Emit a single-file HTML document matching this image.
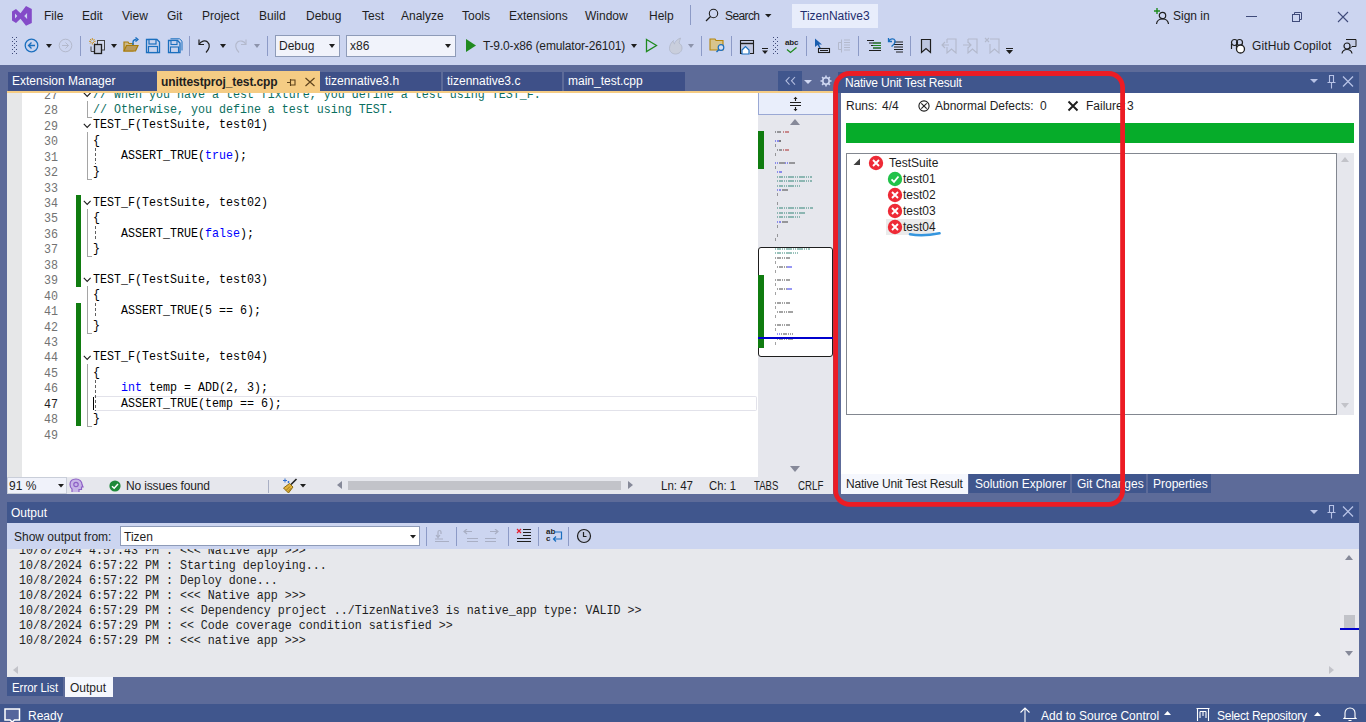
<!DOCTYPE html>
<html><head><meta charset="utf-8">
<style>
*{margin:0;padding:0;box-sizing:border-box}
html,body{width:1366px;height:722px;overflow:hidden}
body{background:#CCD5F0;font-family:"Liberation Sans",sans-serif;font-size:12px;color:#1E1E1E;position:relative}
.a{position:absolute}
.t{position:absolute;white-space:pre;line-height:14px}
.m{font-family:"Liberation Mono",monospace}
.cl{position:absolute;white-space:pre;font-family:"Liberation Mono",monospace;font-size:11.67px;line-height:15.45px;color:#000;transform:translateY(1.5px) scaleY(1.04);transform-origin:0 10.84px}
.ln{left:30px;width:21px;text-align:right}
.kw{color:#0000FF}
.cm{color:#0B6F5F}
.ol{position:absolute;left:12px;white-space:pre;font-family:"Liberation Mono",monospace;font-size:11.67px;line-height:15px;color:#1E1E1E;transform:translateY(1px) scaleY(1.14);transform-origin:0 10.61px}
</style></head><body>
<!-- ===== MENU BAR ===== -->
<svg class="a" style="left:11px;top:5px" width="22" height="22" viewBox="0 0 22 22"><path d="M1 6.5L5 4L9.5 8.3L15 1L20.8 4V18L15 20.8L9.5 13.7L5 18L1 15.5Z M4 8.6L6.3 11L4 13.4Z M16.1 8L13.2 11L16.1 14Z" fill="#844BC8" fill-rule="evenodd"/></svg>
<div class="t" style="left:44px;top:9px">File</div>
<div class="t" style="left:82px;top:9px">Edit</div>
<div class="t" style="left:122px;top:9px">View</div>
<div class="t" style="left:167px;top:9px">Git</div>
<div class="t" style="left:202px;top:9px">Project</div>
<div class="t" style="left:259px;top:9px">Build</div>
<div class="t" style="left:306px;top:9px">Debug</div>
<div class="t" style="left:362px;top:9px">Test</div>
<div class="t" style="left:401px;top:9px">Analyze</div>
<div class="t" style="left:462px;top:9px">Tools</div>
<div class="t" style="left:509px;top:9px">Extensions</div>
<div class="t" style="left:585px;top:9px">Window</div>
<div class="t" style="left:649px;top:9px">Help</div>
<div class="a" style="left:690px;top:5px;width:1px;height:20px;background:#8C9AC6"></div>
<svg class="a" style="left:705px;top:8px" width="14" height="14" viewBox="0 0 14 14"><circle cx="8.5" cy="5.5" r="4.2" fill="none" stroke="#1E1E1E" stroke-width="1.1"/><path d="M5.5 8.5 L1 13" stroke="#1E1E1E" stroke-width="1.3"/></svg>
<div class="t" style="left:725px;top:9px;letter-spacing:-0.6px">Search</div>
<svg class="a" style="left:765px;top:14px" width="7" height="5"><path d="M0 0H6.5L3.25 3.5Z" fill="#1E1E1E"/></svg>
<div class="a" style="left:792px;top:4px;width:86px;height:24px;background:#E8EDFB"></div>
<div class="t" style="left:800px;top:9px;color:#1F2E6E">TizenNative3</div>
<svg class="a" style="left:1153px;top:7px" width="16" height="18" viewBox="0 0 16 18"><path d="M1 4H7M4 1V7" stroke="#1D8B1D" stroke-width="1.4"/><circle cx="9.5" cy="8.5" r="3.2" fill="none" stroke="#1E1E1E" stroke-width="1.2"/><path d="M3.5 17 C4 13 6.5 12 9.5 12 C12.5 12 15 13 15.5 17" fill="none" stroke="#1E1E1E" stroke-width="1.2"/></svg>
<div class="t" style="left:1173px;top:9px">Sign in</div>
<div class="a" style="left:1246px;top:16px;width:11px;height:1px;background:#3F4B7A"></div>
<svg class="a" style="left:1291px;top:11px" width="12" height="12" viewBox="0 0 12 12"><rect x="1.5" y="3.5" width="7" height="7" fill="none" stroke="#3F4B7A"/><path d="M3.5 3.5V1.5H10.5V8.5H8.5" fill="none" stroke="#3F4B7A"/></svg>
<svg class="a" style="left:1337px;top:11px" width="12" height="12" viewBox="0 0 12 12"><path d="M1 1L11 11M11 1L1 11" stroke="#3F4B7A" stroke-width="1.1"/></svg>

<!-- ===== TOOLBAR ===== -->
<svg class="a" style="left:11px;top:36px" width="8" height="19"><g fill="#3F4B7A"><rect x="1" y="1" width="1" height="1"/><rect x="5" y="1" width="1" height="1"/><rect x="3" y="3" width="1" height="1"/><rect x="1" y="5" width="1" height="1"/><rect x="5" y="5" width="1" height="1"/><rect x="3" y="7" width="1" height="1"/><rect x="1" y="9" width="1" height="1"/><rect x="5" y="9" width="1" height="1"/><rect x="3" y="11" width="1" height="1"/><rect x="1" y="13" width="1" height="1"/><rect x="5" y="13" width="1" height="1"/><rect x="3" y="15" width="1" height="1"/><rect x="1" y="17" width="1" height="1"/><rect x="5" y="17" width="1" height="1"/></g></svg>
<svg class="a" style="left:24px;top:38px" width="16" height="16" viewBox="0 0 16 16"><circle cx="7.5" cy="7.5" r="6.3" fill="#C9D3EE" stroke="#1B6FBE" stroke-width="1.3"/><path d="M11 7.5H4.5M7.5 4.5L4.5 7.5L7.5 10.5" fill="none" stroke="#1B6FBE" stroke-width="1.3"/></svg>
<svg class="a" style="left:46px;top:44px" width="7" height="5"><path d="M0 0H6L3 4Z" fill="#1E1E1E"/></svg>
<svg class="a" style="left:58px;top:38px" width="16" height="16" viewBox="0 0 16 16"><circle cx="7.5" cy="7.5" r="6.3" fill="none" stroke="#B3B9CC" stroke-width="1"/><path d="M4 7.5H10.5M7.5 4.5L10.5 7.5L7.5 10.5" fill="none" stroke="#B3B9CC" stroke-width="1"/></svg>
<div class="a" style="left:80px;top:36px;width:1px;height:20px;background:#8C9AC6"></div>
<svg class="a" style="left:88px;top:37px" width="18" height="18" viewBox="0 0 18 18"><path d="M4.3 1V7.6M1 4.3H7.6M2 2L6.6 6.6M6.6 2L2 6.6" stroke="#C88A0C" stroke-width="0.9"/><circle cx="4.3" cy="4.3" r="1.3" fill="#CCD5F0"/><rect x="9.5" y="3.5" width="7" height="9.5" fill="#D3D9EC" stroke="#444" stroke-width="1"/><path d="M3 9.5V14.5H6" fill="none" stroke="#444" stroke-width="1"/><rect x="6.5" y="7.5" width="7" height="9" fill="#C4CADC" stroke="#1E1E1E" stroke-width="1.3"/></svg>
<svg class="a" style="left:111px;top:44px" width="7" height="5"><path d="M0 0H6L3 4Z" fill="#1E1E1E"/></svg>
<svg class="a" style="left:123px;top:37px" width="16" height="16" viewBox="0 0 16 16"><path d="M1 14V5H5L6 6.5H10V14Z" fill="#CDB98A" stroke="#A97D0A" stroke-width="1.2"/><path d="M1 14L3.5 8.5H15L12.5 14Z" fill="#B89A5E" stroke="#A97D0A" stroke-width="1.2"/><path d="M10 8V5.5C10 3.5 11.5 2.5 13.5 2.5" fill="none" stroke="#1B6FBE" stroke-width="1.4"/><path d="M12.5 0.5L15 2.5L12.5 4.5" fill="none" stroke="#1B6FBE" stroke-width="1.4"/></svg>
<svg class="a" style="left:145px;top:38px" width="16" height="16" viewBox="0 0 16 16"><path d="M1.5 1.5H12L14.5 4V14.5H1.5Z" fill="#C9D3EE" stroke="#1B6FBE" stroke-width="1.3"/><rect x="4" y="1.5" width="7" height="4.5" fill="#C9D3EE" stroke="#1B6FBE" stroke-width="1.2"/><rect x="3.5" y="8.5" width="9" height="6" fill="#C9D3EE" stroke="#1B6FBE" stroke-width="1.2"/></svg>
<svg class="a" style="left:167px;top:38px" width="16" height="16" viewBox="0 0 16 16"><path d="M3.5 0.8H12.5L15 3.2V12.5" fill="none" stroke="#1B6FBE" stroke-width="1"/><path d="M1.5 2.5H10.5L13 5V14.5H1.5Z" fill="#C9D3EE" stroke="#1B6FBE" stroke-width="1.3"/><rect x="4" y="2.5" width="6" height="4" fill="#C9D3EE" stroke="#1B6FBE" stroke-width="1.1"/><rect x="3.5" y="9" width="8" height="5.5" fill="#C9D3EE" stroke="#1B6FBE" stroke-width="1.1"/></svg>
<div class="a" style="left:189px;top:36px;width:1px;height:20px;background:#8C9AC6"></div>
<svg class="a" style="left:197px;top:38px" width="16" height="16" viewBox="0 0 16 16"><path d="M2 1.5V6.5H7" fill="none" stroke="#1E1E1E" stroke-width="1.2"/><path d="M2.3 6C4 3 8 2 10.5 4C13.5 6.5 12.5 11 9 14.5" fill="none" stroke="#1E1E1E" stroke-width="1.2"/></svg>
<svg class="a" style="left:220px;top:44px" width="7" height="5"><path d="M0 0H6L3 4Z" fill="#1E1E1E"/></svg>
<svg class="a" style="left:232px;top:38px" width="16" height="16" viewBox="0 0 16 16"><path d="M14 1.5V6.5H9" fill="none" stroke="#B3B9CC" stroke-width="1.1"/><path d="M13.7 6C12 3 8 2 5.5 4C2.5 6.5 3.5 11 7 14.5" fill="none" stroke="#B3B9CC" stroke-width="1.1"/></svg>
<svg class="a" style="left:254px;top:44px" width="7" height="5"><path d="M0 0H6L3 4Z" fill="#8C93AA"/></svg>
<div class="a" style="left:267px;top:36px;width:1px;height:20px;background:#8C9AC6"></div>
<div class="a" style="left:275px;top:35px;width:65px;height:22px;background:#F1F3FB;border:1px solid #8E9BB8"></div>
<div class="t" style="left:279px;top:39px">Debug</div>
<svg class="a" style="left:329px;top:44px" width="7" height="5"><path d="M0 0H6L3 4Z" fill="#1E1E1E"/></svg>
<div class="a" style="left:346px;top:35px;width:110px;height:22px;background:#F1F3FB;border:1px solid #8E9BB8"></div>
<div class="t" style="left:350px;top:39px">x86</div>
<svg class="a" style="left:445px;top:44px" width="7" height="5"><path d="M0 0H6L3 4Z" fill="#1E1E1E"/></svg>
<svg class="a" style="left:465px;top:39px" width="12" height="14"><path d="M1 0L11 6.5L1 13Z" fill="#1F8A1F"/></svg>
<div class="t" style="left:483px;top:39px;letter-spacing:-0.15px">T-9.0-x86 (emulator-26101)</div>
<svg class="a" style="left:631px;top:44px" width="7" height="5"><path d="M0 0H6L3 4Z" fill="#1E1E1E"/></svg>
<svg class="a" style="left:645px;top:38px" width="13" height="15"><path d="M1.5 1.5L11.5 7.5L1.5 13.5Z" fill="none" stroke="#1F8A1F" stroke-width="1.3"/></svg>
<svg class="a" style="left:668px;top:37px" width="16" height="18" viewBox="0 0 16 18"><path d="M12.5 1C9 2.5 6.5 5 6.5 7C5 6 5 4.5 5.5 3.5C3 5.5 1.5 8.5 1.5 11.5C1.5 14.5 4 17 7.5 17C11 17 14 14.5 14 11C14 8.5 12.5 7 11 6C11.5 4 12 2.5 12.5 1Z" fill="#C9CEDC" stroke="#B0B6C8" stroke-width="0.8"/></svg>
<svg class="a" style="left:688px;top:44px" width="7" height="5"><path d="M0 0H6L3 4Z" fill="#8C93AA"/></svg>
<div class="a" style="left:701px;top:36px;width:1px;height:20px;background:#8C9AC6"></div>
<svg class="a" style="left:709px;top:37px" width="17" height="16" viewBox="0 0 17 16"><path d="M1 13V2H6L7 3.5H14V13Z" fill="#D8C48C" stroke="#B5850B" stroke-width="1.1"/><circle cx="12" cy="10.5" r="2.8" fill="#D8DEF0" stroke="#1B6FBE" stroke-width="1.2"/><path d="M10 12.5L7.5 15" stroke="#1B6FBE" stroke-width="1.4"/></svg>
<div class="a" style="left:731px;top:36px;width:1px;height:20px;background:#8C9AC6"></div>
<svg class="a" style="left:739px;top:39px" width="16" height="16" viewBox="0 0 16 16"><path d="M5 14.5H1.5V1.5H14.5V14.5H11" fill="#C3CAE2" stroke="#1E1E1E" stroke-width="1.1"/><path d="M1.5 4.5H14.5" stroke="#1E1E1E" stroke-width="1.4"/><path d="M3 11L6.5 7.5L10 11V15H3Z" fill="#fff" stroke="#1B6FBE" stroke-width="1.2"/></svg>
<svg class="a" style="left:762px;top:48px" width="7" height="7"><path d="M0 0.5H6" stroke="#1E1E1E"/><path d="M0 2.5H6L3 6Z" fill="#1E1E1E"/></svg>
<svg class="a" style="left:773px;top:36px" width="6" height="19"><g fill="#3F4B7A"><rect x="0" y="1" width="1" height="1"/><rect x="4" y="1" width="1" height="1"/><rect x="2" y="3" width="1" height="1"/><rect x="0" y="5" width="1" height="1"/><rect x="4" y="5" width="1" height="1"/><rect x="2" y="7" width="1" height="1"/><rect x="0" y="9" width="1" height="1"/><rect x="4" y="9" width="1" height="1"/><rect x="2" y="11" width="1" height="1"/><rect x="0" y="13" width="1" height="1"/><rect x="4" y="13" width="1" height="1"/><rect x="2" y="15" width="1" height="1"/><rect x="0" y="17" width="1" height="1"/><rect x="4" y="17" width="1" height="1"/></g></svg>
<div class="a" style="left:785px;top:39px;font-size:8px;line-height:8px;font-weight:bold;color:#1E1E1E;letter-spacing:-0.2px">abc</div>
<svg class="a" style="left:786px;top:47px" width="12" height="7"><path d="M1 2.5L4.5 5.5L10.5 0.5" fill="none" stroke="#1F8A1F" stroke-width="1.3"/></svg>
<div class="a" style="left:806px;top:36px;width:1px;height:20px;background:#8C9AC6"></div>
<svg class="a" style="left:814px;top:38px" width="17" height="16" viewBox="0 0 17 16"><path d="M1 0.5L1 9L3.5 7L6 11L7 10.5L5 6.5H8Z" fill="#1B5FAF"/><rect x="4.5" y="10.5" width="11" height="4" fill="none" stroke="#1E1E1E" stroke-width="1.1"/><path d="M6 12.5H14" stroke="#1E1E1E"/></svg>
<svg class="a" style="left:836px;top:38px" width="16" height="16" viewBox="0 0 16 16"><path d="M5.5 1.5V14.5M2.5 4.5V11.5H5.5M2.5 4.5H5.5M8 2H14M8 4.5H14M8 7H14M8 9.5H14M8 12H14" fill="none" stroke="#B3B9CC" stroke-width="1"/></svg>
<div class="a" style="left:858px;top:36px;width:1px;height:20px;background:#8C9AC6"></div>
<svg class="a" style="left:866px;top:38px" width="16" height="16" viewBox="0 0 16 16"><path d="M1 2.5H8M3 5H15M5 7.5H15M7 10H15M3 12.5H15" stroke="#1E1E1E" stroke-width="1"/><path d="M7 5H15M7 7.5H15M7 10H15" stroke="#1F8A1F" stroke-width="1"/></svg>
<svg class="a" style="left:887px;top:37px" width="17" height="17" viewBox="0 0 17 17"><path d="M7 5H16M7 7.5H16M7 10H16M7 12.5H16M9 15H16" stroke="#1E1E1E" stroke-width="1"/><path d="M1.5 1V4.5H5M2 4C3 1.5 7 1 8 3.5C9 6 6 8 4.5 9.5" fill="none" stroke="#1B6FBE" stroke-width="1.3"/></svg>
<div class="a" style="left:910px;top:36px;width:1px;height:20px;background:#8C9AC6"></div>
<svg class="a" style="left:919px;top:38px" width="14" height="16" viewBox="0 0 14 16"><path d="M2.5 1.5H11.5V14.5L7 10.5L2.5 14.5Z" fill="#BCC5E0" stroke="#1E1E1E" stroke-width="1.2"/></svg>
<svg class="a" style="left:941px;top:38px" width="16" height="16" viewBox="0 0 16 16"><path d="M6 1H15V15L10.5 11L6 15V9M6 5V1M1 7H8M4 4L1 7L4 10" fill="none" stroke="#B3B9CC" stroke-width="1.1"/></svg>
<svg class="a" style="left:962px;top:38px" width="16" height="16" viewBox="0 0 16 16"><path d="M6 1H15V15L10.5 11L6 15V9M6 5V1M1 7H9M6 4L9 7L6 10" fill="none" stroke="#B3B9CC" stroke-width="1.1"/></svg>
<svg class="a" style="left:984px;top:37px" width="16" height="17" viewBox="0 0 16 17"><path d="M6 2H15V16L10.5 12L6 16V7M1 1L5 5M5 1L1 5" fill="none" stroke="#B3B9CC" stroke-width="1.1"/></svg>
<svg class="a" style="left:1006px;top:48px" width="8" height="7"><path d="M0 0.5H7" stroke="#1E1E1E"/><path d="M0 2H7L3.5 6Z" fill="#1E1E1E"/></svg>
<svg class="a" style="left:1230px;top:38px" width="16" height="16" viewBox="0 0 16 16"><circle cx="4.5" cy="4.5" r="3" fill="none" stroke="#1E1E1E" stroke-width="1.2"/><circle cx="9.5" cy="4.5" r="3" fill="none" stroke="#1E1E1E" stroke-width="1.2"/><path d="M1.5 11V6M6.5 11V6" stroke="#1E1E1E" stroke-width="1.2"/><circle cx="10.5" cy="11" r="4" fill="#fff" stroke="#1E1E1E" stroke-width="1.3"/></svg>
<div class="t" style="left:1252px;top:39px;letter-spacing:0.1px">GitHub Copilot</div>
<svg class="a" style="left:1341px;top:38px" width="16" height="16" viewBox="0 0 16 16"><path d="M5 1.5H15V8.5H11L8.5 11" fill="#C3CBE4" stroke="#1E1E1E" stroke-width="1"/><circle cx="6" cy="8" r="3" fill="#CCD5F0" stroke="#1E1E1E" stroke-width="1.2"/><path d="M1 15.5C1.5 12.5 3.5 11.5 6 11.5C8.5 11.5 10.5 12.5 11 15.5" fill="none" stroke="#1E1E1E" stroke-width="1.2"/></svg>

<!-- frame -->
<div class="a" style="left:0;top:65px;width:1366px;height:639px;background:#5D6B99"></div>
<!-- doc tabs -->
<div class="a" style="left:8px;top:72px;width:149px;height:19px;background:#3E5088"></div>
<div class="a" style="left:157px;top:71px;width:163px;height:20px;background:#F5CC84"></div>
<div class="a" style="left:320px;top:72px;width:121px;height:19px;background:#3E5088"></div>
<div class="a" style="left:443px;top:72px;width:119px;height:19px;background:#3E5088"></div>
<div class="a" style="left:564px;top:72px;width:121px;height:19px;background:#3E5088"></div>
<div class="a" style="left:778px;top:71px;width:24px;height:20px;background:#40568D"></div>
<div class="a" style="left:7px;top:91px;width:826px;height:2px;background:#F5CC84"></div>
<!-- ===== DOC TAB TEXT ===== -->
<div class="t" style="left:12px;top:74px;color:#fff">Extension Manager</div>
<div class="t" style="left:161px;top:75px;color:#1E1E1E;font-weight:bold;letter-spacing:-0.1px">unittestproj_test.cpp</div>
<svg class="a" style="left:286px;top:78px" width="10" height="9" viewBox="0 0 10 9"><path d="M1 4.5H4.5M4.5 1V8M4.5 2H9V7H4.5" fill="none" stroke="#5E431C" stroke-width="1.1"/></svg>
<svg class="a" style="left:304px;top:77px" width="12" height="10" viewBox="0 0 12 10"><path d="M1.5 1L10.5 9M10.5 1L1.5 9" stroke="#5E431C" stroke-width="1.2"/></svg>
<div class="t" style="left:325px;top:74px;color:#fff">tizennative3.h</div>
<div class="t" style="left:447px;top:74px;color:#fff">tizennative3.c</div>
<div class="t" style="left:568px;top:74px;color:#fff">main_test.cpp</div>
<svg class="a" style="left:784px;top:76px" width="13" height="10" viewBox="0 0 13 10"><path d="M5.5 1L2 4.8L5.5 8.6M11 1L7.5 4.8L11 8.6" fill="none" stroke="#B4BEE0" stroke-width="1.1"/></svg>
<svg class="a" style="left:804px;top:80px" width="9" height="5"><path d="M0 0H8L4 4Z" fill="#D0D8F2"/></svg>
<svg class="a" style="left:820px;top:75px" width="12" height="12" viewBox="0 0 12 12"><circle cx="6" cy="6" r="3.2" fill="none" stroke="#D0D8F2" stroke-width="1.6"/><g stroke="#D0D8F2" stroke-width="1.6"><path d="M6 0.5V2.5M6 9.5V11.5M0.5 6H2.5M9.5 6H11.5M2.1 2.1L3.5 3.5M8.5 8.5L9.9 9.9M2.1 9.9L3.5 8.5M8.5 3.5L9.9 2.1"/></g></svg>

<!-- editor -->
<div class="a" style="left:7px;top:93px;width:751px;height:384px;background:#fff"></div>
<div class="a" style="left:7px;top:93px;width:15px;height:384px;background:#E6E7E8"></div>
<div class="a" style="left:758px;top:93px;width:75px;height:384px;background:#E6E7ED"></div>
<div class="a" style="left:7px;top:477px;width:826px;height:17px;background:#E6E7ED"></div>
<!-- ===== EDITOR CONTENT ===== -->
<div class="a" style="left:7px;top:93px;width:751px;height:384px;overflow:hidden">
<div class="a" style="left:87px;top:302.50px;width:663px;height:15.45px;border:1px solid #E2E2EA;border-left:none;border-radius:0 2px 2px 0"></div>
<div class="cl ln" style="top:-5.20px;color:#727272">27</div>
<div class="cl" style="left:86px;top:-6.50px"><span class="cm">// When you have a test fixture, you define a test using TEST_F.</span></div>
<div class="cl ln" style="top:10.25px;color:#727272">28</div>
<div class="cl" style="left:86px;top:8.95px"><span class="cm">// Otherwise, you define a test using TEST.</span></div>
<div class="cl ln" style="top:25.70px;color:#727272">29</div>
<div class="cl" style="left:86px;top:24.40px">TEST_F(TestSuite, test01)</div>
<div class="cl ln" style="top:41.15px;color:#727272">30</div>
<div class="cl" style="left:86px;top:39.85px">{</div>
<div class="cl ln" style="top:56.60px;color:#727272">31</div>
<div class="cl" style="left:86px;top:55.30px">    ASSERT_TRUE(<span class="kw">true</span>);</div>
<div class="cl ln" style="top:72.05px;color:#727272">32</div>
<div class="cl" style="left:86px;top:70.75px">}</div>
<div class="cl ln" style="top:87.50px;color:#727272">33</div>
<div class="cl ln" style="top:102.95px;color:#727272">34</div>
<div class="cl" style="left:86px;top:101.65px">TEST_F(TestSuite, test02)</div>
<div class="cl ln" style="top:118.40px;color:#727272">35</div>
<div class="cl" style="left:86px;top:117.10px">{</div>
<div class="cl ln" style="top:133.85px;color:#727272">36</div>
<div class="cl" style="left:86px;top:132.55px">    ASSERT_TRUE(<span class="kw">false</span>);</div>
<div class="cl ln" style="top:149.30px;color:#727272">37</div>
<div class="cl" style="left:86px;top:148.00px">}</div>
<div class="cl ln" style="top:164.75px;color:#727272">38</div>
<div class="cl ln" style="top:180.20px;color:#727272">39</div>
<div class="cl" style="left:86px;top:178.90px">TEST_F(TestSuite, test03)</div>
<div class="cl ln" style="top:195.65px;color:#727272">40</div>
<div class="cl" style="left:86px;top:194.35px">{</div>
<div class="cl ln" style="top:211.10px;color:#727272">41</div>
<div class="cl" style="left:86px;top:209.80px">    ASSERT_TRUE(5 == 6);</div>
<div class="cl ln" style="top:226.55px;color:#727272">42</div>
<div class="cl" style="left:86px;top:225.25px">}</div>
<div class="cl ln" style="top:242.00px;color:#727272">43</div>
<div class="cl ln" style="top:257.45px;color:#727272">44</div>
<div class="cl" style="left:86px;top:256.15px">TEST_F(TestSuite, test04)</div>
<div class="cl ln" style="top:272.90px;color:#727272">45</div>
<div class="cl" style="left:86px;top:271.60px">{</div>
<div class="cl ln" style="top:288.35px;color:#727272">46</div>
<div class="cl" style="left:86px;top:287.05px">    <span class="kw">int</span> temp = ADD(2, 3);</div>
<div class="cl ln" style="top:303.80px;color:#1E1E1E">47</div>
<div class="cl" style="left:86px;top:302.50px">    ASSERT_TRUE(temp == 6);</div>
<div class="cl ln" style="top:319.25px;color:#727272">48</div>
<div class="cl" style="left:86px;top:317.95px">}</div>
<div class="cl ln" style="top:334.70px;color:#727272">49</div>
<div class="a" style="left:69px;top:101.65px;width:5px;height:92.70px;background:#107C10"></div>
<div class="a" style="left:69px;top:209.80px;width:5px;height:123.60px;background:#107C10"></div>
<svg class="a" style="left:76px;top:-1.00px" width="9" height="6"><path d="M0.8 0.8L4.2 4.4L7.6 0.8" fill="none" stroke="#1E1E1E" stroke-width="1.1"/></svg>
<svg class="a" style="left:76px;top:29.90px" width="9" height="6"><path d="M0.8 0.8L4.2 4.4L7.6 0.8" fill="none" stroke="#1E1E1E" stroke-width="1.1"/></svg>
<svg class="a" style="left:76px;top:107.15px" width="9" height="6"><path d="M0.8 0.8L4.2 4.4L7.6 0.8" fill="none" stroke="#1E1E1E" stroke-width="1.1"/></svg>
<svg class="a" style="left:76px;top:184.40px" width="9" height="6"><path d="M0.8 0.8L4.2 4.4L7.6 0.8" fill="none" stroke="#1E1E1E" stroke-width="1.1"/></svg>
<svg class="a" style="left:76px;top:261.65px" width="9" height="6"><path d="M0.8 0.8L4.2 4.4L7.6 0.8" fill="none" stroke="#1E1E1E" stroke-width="1.1"/></svg>
<div class="a" style="left:80px;top:7.95px;width:1px;height:16.95px;background:#A5A5A5"></div>
<div class="a" style="left:80px;top:23.90px;width:5px;height:1px;background:#A5A5A5"></div>
<div class="a" style="left:80px;top:38.85px;width:1px;height:47.85px;background:#A5A5A5"></div>
<div class="a" style="left:80px;top:85.70px;width:5px;height:1px;background:#A5A5A5"></div>
<div class="a" style="left:80px;top:116.10px;width:1px;height:47.85px;background:#A5A5A5"></div>
<div class="a" style="left:80px;top:162.95px;width:5px;height:1px;background:#A5A5A5"></div>
<div class="a" style="left:80px;top:193.35px;width:1px;height:47.85px;background:#A5A5A5"></div>
<div class="a" style="left:80px;top:240.20px;width:5px;height:1px;background:#A5A5A5"></div>
<div class="a" style="left:80px;top:270.60px;width:1px;height:63.30px;background:#A5A5A5"></div>
<div class="a" style="left:80px;top:332.90px;width:5px;height:1px;background:#A5A5A5"></div>
<div class="a" style="left:88px;top:55.30px;width:1px;height:15.45px;background:repeating-linear-gradient(#606060 0 3px,transparent 3px 5px)"></div>
<div class="a" style="left:88px;top:132.55px;width:1px;height:15.45px;background:repeating-linear-gradient(#606060 0 3px,transparent 3px 5px)"></div>
<div class="a" style="left:88px;top:209.80px;width:1px;height:15.45px;background:repeating-linear-gradient(#606060 0 3px,transparent 3px 5px)"></div>
<div class="a" style="left:88px;top:287.05px;width:1px;height:30.90px;background:repeating-linear-gradient(#606060 0 3px,transparent 3px 5px)"></div>
<div class="a" style="left:86px;top:303.50px;width:1px;height:13.45px;background:#000"></div>
</div>
<!-- ===== EDITOR STATUS ROW ===== -->
<div class="a" style="left:7px;top:477px;width:60px;height:17px;background:#F0F2FA;border:1px solid #C9CED9"></div>
<div class="t" style="left:9px;top:479px">91 %</div>
<svg class="a" style="left:58px;top:484px" width="7" height="4"><path d="M0 0H6L3 3.5Z" fill="#1E1E1E"/></svg>
<svg class="a" style="left:69px;top:478px" width="15" height="15" viewBox="0 0 15 15"><path d="M3 14V11C1.5 10 1 8 1 6.5C1 3 3.5 1 7 1C10.5 1 13 3.5 13 6.5L14 9H12.5V11.5H10V14" fill="#C7B5E6" stroke="#8D5FC6" stroke-width="1.2"/><circle cx="7" cy="6.5" r="2.2" fill="none" stroke="#8D5FC6" stroke-width="1.2"/></svg>
<svg class="a" style="left:109px;top:480px" width="12" height="12" viewBox="0 0 12 12"><circle cx="6" cy="6" r="5.6" fill="#1F8A3A"/><path d="M3 6.2L5.2 8.2L9 4" fill="none" stroke="#fff" stroke-width="1.5"/></svg>
<div class="t" style="left:126px;top:479px;letter-spacing:-0.15px">No issues found</div>
<div class="a" style="left:268px;top:480px;width:1px;height:13px;background:#A9AFC4"></div>
<svg class="a" style="left:282px;top:478px" width="16" height="16" viewBox="0 0 16 16"><path d="M3 0.5V4.5M1 2.5H5" stroke="#2E6FD0" stroke-width="1"/><path d="M6.5 3V5M5.5 4H7.5" stroke="#2E6FD0" stroke-width="0.9"/><path d="M14.5 1L9 6.5" stroke="#1E1E1E" stroke-width="1.6"/><path d="M7.5 5.5L11 9L6.5 15L1.5 10Z" fill="#E2B23C" stroke="#8A6A10" stroke-width="1"/><path d="M4 12.5L8 8.5M6 13.5L9.5 10" stroke="#8A6A10" stroke-width="0.8"/></svg>
<svg class="a" style="left:300px;top:484px" width="7" height="4"><path d="M0 0H6L3 3.5Z" fill="#1E1E1E"/></svg>
<svg class="a" style="left:337px;top:481px" width="6" height="9"><path d="M5 0V8L0 4Z" fill="#868999"/></svg>
<div class="a" style="left:348px;top:481px;width:273px;height:9px;background:#C2C3C9"></div>
<svg class="a" style="left:628px;top:481px" width="6" height="9"><path d="M0 0V8L5 4Z" fill="#868999"/></svg>
<div class="t" style="left:661px;top:479px;transform:scaleX(0.96);transform-origin:0 0">Ln: 47</div>
<div class="t" style="left:709px;top:479px;transform:scaleX(0.94);transform-origin:0 0">Ch: 1</div>
<div class="t" style="left:754px;top:479px;transform:scaleX(0.8);transform-origin:0 0">TABS</div>
<div class="t" style="left:798px;top:479px;transform:scaleX(0.81);transform-origin:0 0">CRLF</div>
<!-- ===== EDITOR SCROLLBAR / MINIMAP ===== -->
<div class="a" style="left:758px;top:93px;width:75px;height:22px;background:#E9EEFB;border-left:1px solid #9AA8D4;border-bottom:1px solid #9AA8D4"></div>
<svg class="a" style="left:789px;top:96px" width="13" height="16" viewBox="0 0 13 16"><path d="M1 6.5H12M1 9.5H12M6.5 2V5M6.5 11V14" stroke="#1E1E1E" stroke-width="1.1"/><path d="M4.5 3L6.5 0.8L8.5 3ZM4.5 13L6.5 15.2L8.5 13Z" fill="#1E1E1E"/></svg>
<svg class="a" style="left:790px;top:119px" width="11" height="6"><path d="M0 6H10L5 0Z" fill="#868999"/></svg>
<svg class="a" style="left:790px;top:466px" width="11" height="6"><path d="M0 0H10L5 6Z" fill="#868999"/></svg>
<div class="a" style="left:758px;top:131px;width:6px;height:38px;background:#107C10"></div>
<div class="a" style="left:758px;top:247px;width:75px;height:110px;border:1px solid #1E1E1E;border-radius:3px;background:#fff"></div>
<div class="a" style="left:775px;top:130.5px;width:7px;height:2px;background:repeating-linear-gradient(90deg,#333333 0 1.5px,transparent 1.5px 2.2px);opacity:.45"></div>
<div class="a" style="left:783px;top:130.5px;width:7px;height:2px;background:repeating-linear-gradient(90deg,#A31515 0 1.5px,transparent 1.5px 2.2px);opacity:.45"></div>
<div class="a" style="left:775px;top:139.5px;width:4px;height:2px;background:repeating-linear-gradient(90deg,#1A1AE6 0 1.5px,transparent 1.5px 2.2px);opacity:.45"></div>
<div class="a" style="left:779px;top:139.5px;width:2px;height:2px;background:#333333;opacity:.6"></div>
<div class="a" style="left:775px;top:143.5px;width:1px;height:3px;background:#333333;opacity:.45"></div>
<div class="a" style="left:777px;top:148.5px;width:5px;height:2px;background:repeating-linear-gradient(90deg,#333333 0 1.5px,transparent 1.5px 2.2px);opacity:.45"></div>
<div class="a" style="left:783px;top:148.5px;width:7px;height:2px;background:repeating-linear-gradient(90deg,#A31515 0 1.5px,transparent 1.5px 2.2px);opacity:.45"></div>
<div class="a" style="left:775px;top:152.5px;width:1px;height:3px;background:#333333;opacity:.45"></div>
<div class="a" style="left:775px;top:162.0px;width:3px;height:2px;background:repeating-linear-gradient(90deg,#1A1AE6 0 1.5px,transparent 1.5px 2.2px);opacity:.45"></div>
<div class="a" style="left:779px;top:162.0px;width:6px;height:2px;background:repeating-linear-gradient(90deg,#333333 0 1.5px,transparent 1.5px 2.2px);opacity:.45"></div>
<div class="a" style="left:785px;top:162.0px;width:3px;height:2px;background:repeating-linear-gradient(90deg,#1A1AE6 0 1.5px,transparent 1.5px 2.2px);opacity:.45"></div>
<div class="a" style="left:789px;top:162.0px;width:6px;height:2px;background:repeating-linear-gradient(90deg,#333333 0 1.5px,transparent 1.5px 2.2px);opacity:.45"></div>
<div class="a" style="left:775px;top:166.0px;width:1px;height:3px;background:#333333;opacity:.45"></div>
<div class="a" style="left:777px;top:171.0px;width:5px;height:2px;background:repeating-linear-gradient(90deg,#1A1AE6 0 1.5px,transparent 1.5px 2.2px);opacity:.45"></div>
<div class="a" style="left:777px;top:175.5px;width:35px;height:2px;background:repeating-linear-gradient(90deg,#1F7A6A 0 1.5px,transparent 1.5px 2.2px);opacity:.45"></div>
<div class="a" style="left:777px;top:180.0px;width:35px;height:2px;background:repeating-linear-gradient(90deg,#1F7A6A 0 1.5px,transparent 1.5px 2.2px);opacity:.45"></div>
<div class="a" style="left:777px;top:184.5px;width:23px;height:2px;background:repeating-linear-gradient(90deg,#1F7A6A 0 1.5px,transparent 1.5px 2.2px);opacity:.45"></div>
<div class="a" style="left:777px;top:189.0px;width:4px;height:2px;background:repeating-linear-gradient(90deg,#1A1AE6 0 1.5px,transparent 1.5px 2.2px);opacity:.45"></div>
<div class="a" style="left:782px;top:189.0px;width:6px;height:2px;background:repeating-linear-gradient(90deg,#333333 0 1.5px,transparent 1.5px 2.2px);opacity:.45"></div>
<div class="a" style="left:777px;top:193.0px;width:1px;height:3px;background:#333333;opacity:.45"></div>
<div class="a" style="left:777px;top:202.0px;width:1px;height:3px;background:#333333;opacity:.45"></div>
<div class="a" style="left:777px;top:207.0px;width:36px;height:2px;background:repeating-linear-gradient(90deg,#1F7A6A 0 1.5px,transparent 1.5px 2.2px);opacity:.45"></div>
<div class="a" style="left:777px;top:211.5px;width:29px;height:2px;background:repeating-linear-gradient(90deg,#1F7A6A 0 1.5px,transparent 1.5px 2.2px);opacity:.45"></div>
<div class="a" style="left:777px;top:216.0px;width:23px;height:2px;background:repeating-linear-gradient(90deg,#1F7A6A 0 1.5px,transparent 1.5px 2.2px);opacity:.45"></div>
<div class="a" style="left:777px;top:220.5px;width:4px;height:2px;background:repeating-linear-gradient(90deg,#1A1AE6 0 1.5px,transparent 1.5px 2.2px);opacity:.45"></div>
<div class="a" style="left:782px;top:220.5px;width:7px;height:2px;background:repeating-linear-gradient(90deg,#333333 0 1.5px,transparent 1.5px 2.2px);opacity:.45"></div>
<div class="a" style="left:777px;top:224.5px;width:1px;height:3px;background:#333333;opacity:.45"></div>
<div class="a" style="left:777px;top:233.5px;width:1px;height:3px;background:#333333;opacity:.45"></div>
<div class="a" style="left:775px;top:238.0px;width:1px;height:3px;background:#333333;opacity:.45"></div>
<div class="a" style="left:775px;top:247.5px;width:35px;height:2px;background:repeating-linear-gradient(90deg,#1F7A6A 0 1.5px,transparent 1.5px 2.2px);opacity:.45"></div>
<div class="a" style="left:775px;top:252.0px;width:23px;height:2px;background:repeating-linear-gradient(90deg,#1F7A6A 0 1.5px,transparent 1.5px 2.2px);opacity:.45"></div>
<div class="a" style="left:775px;top:256.5px;width:15px;height:2px;background:repeating-linear-gradient(90deg,#333333 0 1.5px,transparent 1.5px 2.2px);opacity:.45"></div>
<div class="a" style="left:775px;top:260.5px;width:1px;height:3px;background:#333333;opacity:.45"></div>
<div class="a" style="left:777px;top:265.5px;width:10px;height:2px;background:repeating-linear-gradient(90deg,#333333 0 1.5px,transparent 1.5px 2.2px);opacity:.45"></div>
<div class="a" style="left:787px;top:265.5px;width:5px;height:2px;background:repeating-linear-gradient(90deg,#1A1AE6 0 1.5px,transparent 1.5px 2.2px);opacity:.45"></div>
<div class="a" style="left:775px;top:269.5px;width:1px;height:3px;background:#333333;opacity:.45"></div>
<div class="a" style="left:775px;top:279.0px;width:15px;height:2px;background:repeating-linear-gradient(90deg,#333333 0 1.5px,transparent 1.5px 2.2px);opacity:.45"></div>
<div class="a" style="left:775px;top:283.0px;width:1px;height:3px;background:#333333;opacity:.45"></div>
<div class="a" style="left:777px;top:288.0px;width:10px;height:2px;background:repeating-linear-gradient(90deg,#333333 0 1.5px,transparent 1.5px 2.2px);opacity:.45"></div>
<div class="a" style="left:787px;top:288.0px;width:5px;height:2px;background:repeating-linear-gradient(90deg,#1A1AE6 0 1.5px,transparent 1.5px 2.2px);opacity:.45"></div>
<div class="a" style="left:775px;top:292.0px;width:1px;height:3px;background:#333333;opacity:.45"></div>
<div class="a" style="left:775px;top:301.5px;width:15px;height:2px;background:repeating-linear-gradient(90deg,#333333 0 1.5px,transparent 1.5px 2.2px);opacity:.45"></div>
<div class="a" style="left:775px;top:305.5px;width:1px;height:3px;background:#333333;opacity:.45"></div>
<div class="a" style="left:777px;top:310.5px;width:16px;height:2px;background:repeating-linear-gradient(90deg,#333333 0 1.5px,transparent 1.5px 2.2px);opacity:.45"></div>
<div class="a" style="left:775px;top:314.5px;width:1px;height:3px;background:#333333;opacity:.45"></div>
<div class="a" style="left:775px;top:324.0px;width:15px;height:2px;background:repeating-linear-gradient(90deg,#333333 0 1.5px,transparent 1.5px 2.2px);opacity:.45"></div>
<div class="a" style="left:775px;top:328.0px;width:1px;height:3px;background:#333333;opacity:.45"></div>
<div class="a" style="left:777px;top:333.0px;width:3px;height:2px;background:repeating-linear-gradient(90deg,#1A1AE6 0 1.5px,transparent 1.5px 2.2px);opacity:.45"></div>
<div class="a" style="left:781px;top:333.0px;width:12px;height:2px;background:repeating-linear-gradient(90deg,#333333 0 1.5px,transparent 1.5px 2.2px);opacity:.45"></div>
<div class="a" style="left:777px;top:337.5px;width:16px;height:2px;background:repeating-linear-gradient(90deg,#333333 0 1.5px,transparent 1.5px 2.2px);opacity:.45"></div>
<div class="a" style="left:775px;top:341.5px;width:1px;height:3px;background:#333333;opacity:.45"></div>
<div class="a" style="left:758px;top:275px;width:6px;height:73px;background:#107C10"></div>
<div class="a" style="left:758px;top:337px;width:75px;height:2px;background:#0000CD"></div>
<!-- tool window -->
<div class="a" style="left:838px;top:72px;width:521px;height:21px;background:#40568D"></div>
<div class="a" style="left:841px;top:93px;width:518px;height:381px;background:#fff"></div>
<!-- ===== TOOL WINDOW CONTENT ===== -->
<div class="t" style="left:845px;top:76px;color:#fff;letter-spacing:-0.2px">Native Unit Test Result</div>
<svg class="a" style="left:1310px;top:79px" width="9" height="5"><path d="M0 0H8L4 4Z" fill="#B7C2E6"/></svg>
<svg class="a" style="left:1327px;top:75px" width="9" height="14" viewBox="0 0 9 14"><path d="M2.5 0.5H6.5V7.5H2.5ZM0.5 7.5H8.5M4.5 7.5V13.5" fill="none" stroke="#B7C2E6" stroke-width="1.1"/></svg>
<svg class="a" style="left:1342px;top:76px" width="12" height="11" viewBox="0 0 12 11"><path d="M1 0.5L11 10.5M11 0.5L1 10.5" stroke="#B7C2E6" stroke-width="1.3"/></svg>
<div class="t" style="left:846px;top:99px">Runs:</div>
<div class="t" style="left:882px;top:99px">4/4</div>
<svg class="a" style="left:918px;top:100px" width="12" height="12" viewBox="0 0 12 12"><circle cx="6" cy="6" r="5.1" fill="none" stroke="#1E1E1E" stroke-width="1.1"/><path d="M3.3 3.3L8.7 8.7M8.7 3.3L3.3 8.7" stroke="#1E1E1E" stroke-width="1.1"/></svg>
<div class="t" style="left:935px;top:99px">Abnormal Defects:</div>
<div class="t" style="left:1040px;top:99px">0</div>
<svg class="a" style="left:1067px;top:100px" width="12" height="12" viewBox="0 0 12 12"><path d="M1.5 1.5L10.5 10.5M10.5 1.5L1.5 10.5" stroke="#1E1E1E" stroke-width="1.9"/></svg>
<div class="t" style="left:1086px;top:99px">Failure:</div>
<div class="t" style="left:1127px;top:99px">3</div>
<div class="a" style="left:846px;top:123px;width:508px;height:20px;background:#06AC2A"></div>
<div class="a" style="left:846px;top:153px;width:491px;height:262px;border:1px solid #828790;background:#fff"></div>
<div class="a" style="left:1337px;top:153px;width:17px;height:262px;background:#E6E7ED"></div>
<svg class="a" style="left:1341px;top:157px" width="9" height="6"><path d="M0 5H8L4 0Z" fill="#C2C3C9"/></svg>
<svg class="a" style="left:1341px;top:403px" width="9" height="6"><path d="M0 0H8L4 5Z" fill="#C2C3C9"/></svg>
<svg class="a" style="left:853px;top:158px" width="8" height="8"><path d="M7 0.5V7H0.5Z" fill="#404040"/></svg>
<svg class="a" style="left:868px;top:155px" width="16" height="16" viewBox="0 0 16 16"><circle cx="8" cy="8" r="7.2" fill="#EE2A36"/><path d="M5 5L11 11M11 5L5 11" stroke="#fff" stroke-width="1.9"/></svg>
<div class="t" style="left:889px;top:156px">TestSuite</div>
<div class="a" style="left:886px;top:219px;width:48px;height:16px;background:#EBEBEB"></div>
<svg class="a" style="left:887px;top:171px" width="16" height="16" viewBox="0 0 16 16"><circle cx="8" cy="8" r="7.2" fill="#22C24A"/><path d="M4.5 8.3L7 10.8L11.5 5.5" fill="none" stroke="#fff" stroke-width="1.8"/></svg>
<div class="t" style="left:903px;top:172px">test01</div>
<svg class="a" style="left:887px;top:187px" width="16" height="16" viewBox="0 0 16 16"><circle cx="8" cy="8" r="7.2" fill="#EE2A36"/><path d="M5 5L11 11M11 5L5 11" stroke="#fff" stroke-width="1.9"/></svg>
<div class="t" style="left:903px;top:188px">test02</div>
<svg class="a" style="left:887px;top:203px" width="16" height="16" viewBox="0 0 16 16"><circle cx="8" cy="8" r="7.2" fill="#EE2A36"/><path d="M5 5L11 11M11 5L5 11" stroke="#fff" stroke-width="1.9"/></svg>
<div class="t" style="left:903px;top:204px">test03</div>
<svg class="a" style="left:887px;top:219px" width="16" height="16" viewBox="0 0 16 16"><circle cx="8" cy="8" r="7.2" fill="#EE2A36"/><path d="M5 5L11 11M11 5L5 11" stroke="#fff" stroke-width="1.9"/></svg>
<div class="t" style="left:903px;top:220px">test04</div>
<svg class="a" style="left:905px;top:229px" width="38" height="8" viewBox="0 0 38 8"><path d="M5 5.2C12 6.5 24 6.3 34.5 4.3" fill="none" stroke="#3596DE" stroke-width="2.6" stroke-linecap="round"/></svg>
<!-- tool window tabs -->
<div class="a" style="left:841px;top:474px;width:127px;height:20px;background:#F5F7FD"></div>
<div class="t" style="left:846px;top:477px;letter-spacing:-0.2px">Native Unit Test Result</div>
<div class="a" style="left:969px;top:474px;width:101px;height:19px;background:#40568D"></div>
<div class="t" style="left:975px;top:477px;color:#fff">Solution Explorer</div>
<div class="a" style="left:1072px;top:474px;width:74px;height:19px;background:#40568D"></div>
<div class="t" style="left:1077px;top:477px;color:#fff">Git Changes</div>
<div class="a" style="left:1148px;top:474px;width:63px;height:19px;background:#40568D"></div>
<div class="t" style="left:1153px;top:477px;color:#fff">Properties</div>

<!-- output -->
<div class="a" style="left:7px;top:502px;width:1352px;height:21px;background:#40568D"></div>
<div class="a" style="left:7px;top:523px;width:1352px;height:26px;background:#CCD5F0"></div>
<div class="a" style="left:7px;top:549px;width:1352px;height:128px;background:#E7E8EC"></div>
<!-- status -->
<div class="a" style="left:0;top:704px;width:1366px;height:18px;background:#40568D"></div>
<!-- ===== OUTPUT ===== -->
<div class="t" style="left:11px;top:506px;color:#fff">Output</div>
<svg class="a" style="left:1310px;top:510px" width="9" height="5"><path d="M0 0H8L4 4Z" fill="#B7C2E6"/></svg>
<svg class="a" style="left:1327px;top:505px" width="9" height="14" viewBox="0 0 9 14"><path d="M2.5 0.5H6.5V7.5H2.5ZM0.5 7.5H8.5M4.5 7.5V13.5" fill="none" stroke="#B7C2E6" stroke-width="1.1"/></svg>
<svg class="a" style="left:1342px;top:506px" width="12" height="11" viewBox="0 0 12 11"><path d="M1 0.5L11 10.5M11 0.5L1 10.5" stroke="#B7C2E6" stroke-width="1.3"/></svg>
<div class="t" style="left:14px;top:530px">Show output from:</div>
<div class="a" style="left:120px;top:526px;width:300px;height:20px;background:#fff;border:1px solid #8E9BB8"></div>
<div class="t" style="left:124px;top:530px">Tizen</div>
<svg class="a" style="left:410px;top:535px" width="7" height="4"><path d="M0 0H6L3 3.5Z" fill="#1E1E1E"/></svg>
<div class="a" style="left:426px;top:527px;width:1px;height:19px;background:#8C9AC6"></div>
<svg class="a" style="left:433px;top:528px" width="17" height="16" viewBox="0 0 17 16"><path d="M2 13.5H16M2 11H10M5 9V4C5 2 8 2 8 4V6M3 7L5 9.5L7 7" fill="none" stroke="#A9AFC4" stroke-width="1.2"/></svg>
<div class="a" style="left:456px;top:527px;width:1px;height:19px;background:#8C9AC6"></div>
<svg class="a" style="left:463px;top:529px" width="16" height="14" viewBox="0 0 16 14"><path d="M4 9.5H15M4 12.5H15M1 2.5H9M4 0L1 2.5L4 5" fill="none" stroke="#A9AFC4" stroke-width="1.2"/></svg>
<svg class="a" style="left:484px;top:529px" width="16" height="14" viewBox="0 0 16 14"><path d="M1 9.5H12M1 12.5H12M6 2.5H14M11 0L14 2.5L11 5" fill="none" stroke="#A9AFC4" stroke-width="1.2"/></svg>
<div class="a" style="left:508px;top:527px;width:1px;height:19px;background:#8C9AC6"></div>
<svg class="a" style="left:516px;top:528px" width="16" height="16" viewBox="0 0 16 16"><path d="M1 1L5 5M5 1L1 5" stroke="#E51F2F" stroke-width="1.2"/><path d="M7 1.5H15M7 4.5H15M7 7.5H15M1 10.5H15M1 13.5H15" stroke="#1E1E1E" stroke-width="1.1"/></svg>
<div class="a" style="left:538px;top:527px;width:1px;height:19px;background:#8C9AC6"></div>
<div class="a" style="left:546px;top:528px;font-size:8px;line-height:7px;font-weight:bold;color:#1E1E1E;white-space:pre">ab<br>c</div>
<svg class="a" style="left:552px;top:530px" width="11" height="13" viewBox="0 0 11 13"><path d="M2 2H9.5V9H1.5M4 6.5L1.5 9L4 11.5" fill="none" stroke="#1B6FBE" stroke-width="1.2"/></svg>
<div class="a" style="left:568px;top:527px;width:1px;height:19px;background:#8C9AC6"></div>
<svg class="a" style="left:576px;top:528px" width="16" height="16" viewBox="0 0 16 16"><circle cx="8" cy="8" r="6.5" fill="#C3CAE0" stroke="#1E1E1E" stroke-width="1.2"/><path d="M7.5 4V8.5H10.5" fill="none" stroke="#1E1E1E" stroke-width="1.2"/></svg>
<div class="a" style="left:7px;top:549px;width:1333px;height:128px;overflow:hidden">
<div class="ol" style="top:-6px">10/8/2024 4:57:43 PM : &lt;&lt;&lt; Native app &gt;&gt;&gt;</div>
<div class="ol" style="top:9px">10/8/2024 6:57:22 PM : Starting deploying...</div>
<div class="ol" style="top:24px">10/8/2024 6:57:22 PM : Deploy done...</div>
<div class="ol" style="top:39px">10/8/2024 6:57:22 PM : &lt;&lt;&lt; Native app &gt;&gt;&gt;</div>
<div class="ol" style="top:54px">10/8/2024 6:57:29 PM : &lt;&lt; Dependency project ../TizenNative3 is native_app type: VALID &gt;&gt;</div>
<div class="ol" style="top:69px">10/8/2024 6:57:29 PM : &lt;&lt; Code coverage condition satisfied &gt;&gt;</div>
<div class="ol" style="top:84px">10/8/2024 6:57:29 PM : &lt;&lt;&lt; native app &gt;&gt;&gt;</div>
</div>
<div class="a" style="left:1340px;top:549px;width:19px;height:128px;background:#E9E9EE"></div>
<svg class="a" style="left:1345px;top:555px" width="9" height="6"><path d="M0 5H8L4 0Z" fill="#868999"/></svg>
<div class="a" style="left:1344px;top:615px;width:11px;height:13px;background:#C2C3C9"></div>
<div class="a" style="left:1340px;top:628px;width:19px;height:2px;background:#0000CD"></div>
<svg class="a" style="left:1345px;top:651px" width="9" height="6"><path d="M0 0H8L4 5Z" fill="#868999"/></svg>
<svg class="a" style="left:13px;top:666px" width="6" height="9"><path d="M5 0V8L0 4Z" fill="#C2C3C9"/></svg>
<svg class="a" style="left:1329px;top:666px" width="6" height="9"><path d="M0 0V8L5 4Z" fill="#C2C3C9"/></svg>
<!-- output tabs -->
<div class="a" style="left:7px;top:677px;width:56px;height:19px;background:#40568D"></div>
<div class="t" style="left:12px;top:681px;color:#fff;transform:scaleX(0.95);transform-origin:0 0">Error List</div>
<div class="a" style="left:65px;top:677px;width:48px;height:20px;background:#F5F7FD"></div>
<div class="t" style="left:70px;top:681px">Output</div>
<!-- ===== STATUS BAR ===== -->
<svg class="a" style="left:4px;top:708px" width="17" height="14" viewBox="0 0 17 14"><path d="M1 1H15.5V12H10.5L8.2 14L6 12H1Z" fill="#55659C" stroke="#fff" stroke-width="1.5"/></svg>
<div class="t" style="left:28px;top:709px;color:#fff">Ready</div>
<svg class="a" style="left:1019px;top:706px" width="12" height="16" viewBox="0 0 12 16"><path d="M6 2V16M1.5 6.5L6 2L10.5 6.5" fill="none" stroke="#fff" stroke-width="1.1"/></svg>
<div class="t" style="left:1041px;top:709px;color:#fff">Add to Source Control</div>
<svg class="a" style="left:1164px;top:711px" width="8" height="5"><path d="M0 4H7L3.5 0Z" fill="#fff"/></svg>
<svg class="a" style="left:1195px;top:707px" width="16" height="15" viewBox="0 0 16 15"><path d="M1.5 1.5H14.5M2.5 1.5V14M13.5 1.5V14M5 4.5V11M11 4.5V11M5 4.5H11M8 4.5V9" fill="none" stroke="#fff" stroke-width="1.1"/></svg>
<div class="t" style="left:1217px;top:709px;color:#fff;letter-spacing:-0.25px">Select Repository</div>
<svg class="a" style="left:1314px;top:712px" width="8" height="5"><path d="M0 4H7L3.5 0Z" fill="#fff"/></svg>
<svg class="a" style="left:1343px;top:706px" width="14" height="16" viewBox="0 0 14 16"><path d="M2 11.5V7C2 4 4 2 7 2C10 2 12 4 12 7V11.5L13 12.5H1Z M5.5 14.5H8.5" fill="none" stroke="#fff" stroke-width="1.1"/></svg>

<!-- ===== RED ANNOTATION ===== -->
<svg class="a" style="left:0;top:0" width="1366" height="722"><rect x="835.6" y="73.5" width="287" height="430.8" rx="14" fill="none" stroke="#EC1C24" stroke-width="4.8"/></svg>
</body></html>
